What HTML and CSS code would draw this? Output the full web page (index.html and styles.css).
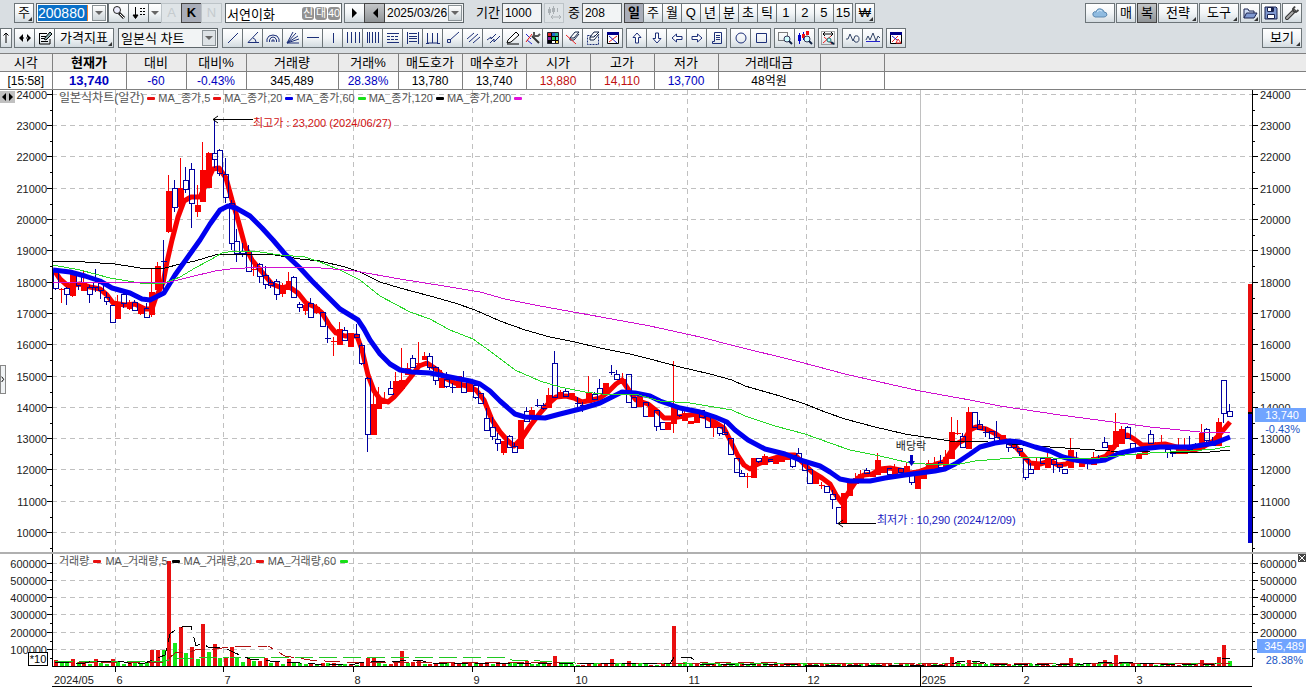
FILE: index.html
```html
<!DOCTYPE html>
<html lang="ko">
<head>
    <meta charset="utf-8">
    <title>서연이화 - 차트</title>
    <link rel="stylesheet" href="styles.css">
</head>
<body>
    <header class="toolbars">
        <div class="toolbar">
            <div class="group first">
                <button class="btn more">주</button>
            </div>
            <div class="combo code">
                <input type="text" value="200880" aria-label="종목코드">
                <button class="drop" aria-label="종목 목록"></button>
            </div>
            <div class="group">
                <button class="btn" aria-label="종목 검색"><svg viewBox="0 0 16 16"><circle cx="6" cy="5" r="3.5" fill="#eef" stroke="#222"/><path d="M8 8l5 5" stroke="#222" stroke-width="3"/><path d="M9 9l4 4" stroke="#fff"/></svg></button>
                <button class="btn" aria-label="정렬"><svg viewBox="0 0 16 16"><path d="M4.500 2v11M2 10l2.500 3.500L7 10z" stroke="#000" fill="#000"/><path d="M9 3.500h6M9 6.500h6M9 9.500h6" stroke="#000" stroke-dasharray="2 1"/></svg></button>
                <button class="btn thin" aria-label="정렬 목록"><i class="down"></i></button>
                <button class="btn off" disabled>A</button>
                <button class="btn on">K</button>
                <button class="btn off" disabled>N</button>
            </div>
            <div class="name">
                <input type="text" value="서연이화" aria-label="종목명">
                <span class="tag">신</span><span class="tag">대</span><span class="tag">40</span>
            </div>
            <div class="group step">
                <button class="btn" aria-label="다음"><svg viewBox="0 0 16 16"><path d="M5 3v10l5-5z"/></svg></button>
                <button class="btn gray" aria-label="이전"><svg viewBox="0 0 16 16"><path d="M11 3v10L6 8z"/></svg></button>
            </div>
            <div class="combo date">
                <input type="text" value="2025/03/26" aria-label="날짜">
                <button class="drop" aria-label="달력"></button>
            </div>
            <label class="lbl period" for="period">기간</label>
            <input class="num" type="text" id="period" value="1000">
            <button class="btn faded" aria-label="간격 조정"><svg viewBox="0 0 16 16"><path d="M3.500 2v8M7.500 1v8M11.500 3v4M6 12h8M7 10l-2 2 2 2M13 10l2 2-2 2" fill="none" stroke="#aab0b4"/><path d="M2 4h3v4H2zM6 3h3v4H6z" fill="#aab0b4"/></svg></button>
            <label class="lbl" for="count">중</label>
            <input class="num" type="text" id="count" value="208">
            <div class="group cycle">
                <button class="btn on">일</button>
                <button class="btn">주</button>
                <button class="btn">월</button>
                <button class="btn">Q</button>
                <button class="btn">년</button>
                <button class="btn">분</button>
                <button class="btn">초</button>
                <button class="btn">틱</button>
                <button class="btn">1</button>
                <button class="btn">2</button>
                <button class="btn">5</button>
                <button class="btn">15</button>
            </div>
            <button class="btn more">₩</button>
            <div class="right">
                <button class="btn cloud" aria-label="클라우드"><svg viewBox="0 0 16 16"><path d="M3 12q-3-1-2-4 1-2 3-1 1-4 5-3 3 1 3 3 3 0 3 3-1 2-3 2z" fill="#8fbbe0" stroke="#5c88b0"/><path d="M5 7q2-3 5-1" fill="none" stroke="#d5eafa"/></svg></button>
                <button class="btn">매</button>
                <button class="btn gray">복</button>
                <button class="btn wide more">전략</button>
                <button class="btn wide more">도구</button>
                <button class="btn more" aria-label="열기"><svg viewBox="0 0 16 16"><path d="M2 13V4h4l1 2h5v2" fill="#cfdcf4" stroke="#1c2450"/><path d="M2 13l2.500-5H15l-3 5z" fill="#7f98d0" stroke="#1c2450"/></svg></button>
                <button class="btn" aria-label="저장"><svg viewBox="0 0 16 16"><path d="M2 2h11l1 1v11H2z" fill="#7f98d0" stroke="#1c2450"/><path d="M4.500 2.500h6v4h-6zM4.500 9.500h7v4h-7z" fill="#fff" stroke="#1c2450"/><path d="M8 3h2v3H8z" fill="#1c2450"/></svg></button>
                <button class="btn" aria-label="설정"><svg viewBox="0 0 16 16"><path d="M3 13l7-7" stroke="#333" stroke-width="4" stroke-linecap="round"/><path d="M3 13l7-7" stroke="#aaa" stroke-width="2" stroke-linecap="round"/><path d="M11 1.500L9 4l.5 2.500L12 7l2.500-2" fill="none" stroke="#444" stroke-width="2"/></svg></button>
            </div>
        </div>
        <div class="toolbar">
            <button class="btn thin" aria-label="위로"><svg viewBox="0 0 10 16"><path d="M5 3v10M2.500 5.500L5 3l2.500 2.500" fill="none" stroke="#000"/></svg></button>
            <div class="group tight">
                <button class="btn" aria-label="좌우"><svg viewBox="0 0 16 16"><path d="M6 4v8L2 8zM10 4v8l4-4zM5 7.500h2v1H5zM9 7.500h2v1H9z"/></svg></button>
                <button class="btn" aria-label="편집"><svg viewBox="0 0 16 16"><path d="M2 3.500h8M2.500 3v11H13V9M4 6.500h5M4 8.500h3M4 11.500h7" fill="none" stroke="#000"/><path d="M7 9l6-7 2 2-6 6z" fill="#8aa" stroke="#000"/></svg></button>
                <button class="btn more index">가격지표</button>
            </div>
            <div class="pick">
                <select aria-label="차트 종류"><option>일본식 차트</option></select>
            </div>
            <div class="group draw">
                <button class="btn" aria-label="추세선"><svg viewBox="0 0 16 16"><path d="M3 13L13 3"/></svg></button>
                <button class="btn" aria-label="각도"><svg viewBox="0 0 16 16"><path d="M13 2L3 12.500h11M8 8q3 1 3 4"/></svg></button>
                <button class="btn" aria-label="아크"><svg viewBox="0 0 16 16"><path d="M2 12V9q1-4 6-4t6 4v3M4.500 12v-2q1-3 3.500-3t3.500 3v2M7 12v-2h2v2"/></svg></button>
                <button class="btn" aria-label="팬"><svg viewBox="0 0 16 16"><path d="M2 13L8 2M2 13l9-10M2 13l11-7M2 13l12-4M2 13h12"/></svg></button>
                <button class="btn" aria-label="수평선"><svg viewBox="0 0 16 16"><path d="M2 7.500h12"/></svg></button>
                <button class="btn" aria-label="수직선"><svg viewBox="0 0 16 16"><path d="M8.500 3v10"/></svg></button>
                <button class="btn" aria-label="시간대"><svg viewBox="0 0 16 16"><path d="M2.500 2v11M6.500 2v11M10.500 2v11M14.500 2v11"/></svg></button>
                <button class="btn" aria-label="피보나치 시간"><svg viewBox="0 0 16 16"><path d="M2.500 2v11M4.500 2v11M7.500 2v11M10.500 2v11M13.500 2v11"/></svg></button>
                <button class="btn" aria-label="되돌림"><svg viewBox="0 0 16 16"><path d="M2 3.500h12M2 12.500h12"/><path d="M2 6.500h12M2 9.500h12" stroke-dasharray="3 1"/></svg></button>
                <button class="btn" aria-label="분할선"><svg viewBox="0 0 16 16"><path d="M2.500 2v12M13.500 2v12M4 3.500h8M4 6.500h8M4 8.500h8M4 11.500h8"/></svg></button>
                <button class="btn" aria-label="사이클"><svg viewBox="0 0 16 16"><path d="M2.500 3v10h10V3M7.500 3v10M1 13.500h3M12 13.500h3"/></svg></button>
                <button class="btn" aria-label="선분"><svg viewBox="0 0 16 16"><path d="M5 10l9-8M2.500 9.500h3v3h-3z"/></svg></button>
                <button class="btn" aria-label="평행선"><svg viewBox="0 0 16 16"><path d="M2 9l7-6M4 12l9-8M8 13l7-6"/></svg></button>
                <button class="btn" aria-label="채널"><svg viewBox="0 0 16 16"><path d="M2 10l4-3v2l5-5M5 13l4-4v3l6-6"/></svg></button>
                <button class="btn" aria-label="연필"><svg viewBox="0 0 16 16"><path d="M3 10l8-8 3 3-8 7-4 1z" fill="#fff" stroke="#000"/><path d="M2 14h12" stroke="#000"/></svg></button>
                <button class="btn" aria-label="도구 설정"><svg viewBox="0 0 16 16"><path d="M1 4l5 5M2 10l5 4" stroke="#22c"/><path d="M1 12L7 4" stroke="#e11"/><path d="M7 6l7 7" stroke="#333" stroke-width="2"/><path d="M9 2v4h4l2-2" stroke="#555" stroke-width="2"/></svg></button>
                <button class="btn" aria-label="색상"><svg viewBox="0 0 16 16"><path d="M2.500 2.500h11v11h-11z" fill="#000" stroke="#223"/><path d="M3 3h3v3H3z" fill="#d22" stroke="none"/><path d="M7 3h3v3H7z" fill="#26c" stroke="none"/><path d="M10 3h3v3h-3z" fill="#2a8" stroke="none"/><path d="M3 7h3v3H3z" fill="#82a" stroke="none"/><path d="M7 7h3v3H7z" fill="#2c4" stroke="none"/><path d="M11 7h2v3h-2z" fill="#3dd" stroke="none"/><path d="M7 11h3v2H7z" fill="#fff" stroke="none"/><path d="M11 11h2v2h-2z" fill="#fd4" stroke="none"/></svg></button>
                <button class="btn" aria-label="지우개"><svg viewBox="0 0 16 16"><path d="M5 8l5-6h4l-5 6zM5 8v2h4l5-6" fill="#fff" stroke="#124"/><path d="M1 5l10 9" stroke="#e22"/></svg></button>
                <button class="btn" aria-label="영역 지우기"><svg viewBox="0 0 16 16"><path d="M2.500 5.500h11v9h-11z" stroke-dasharray="2 1"/><path d="M5 7l4-5h5l-5 5zM5 7v3h4l5-6" fill="#fff" stroke="#124"/></svg></button>
                <button class="btn" aria-label="전체 삭제"><svg viewBox="0 0 16 16"><path d="M2.500 2.500h11v11h-11z" fill="#fff" stroke="#000"/><path d="M2 2h12v3H2z" fill="#008" stroke="none"/><path d="M4 12l8-6" stroke="#e22"/><path d="M4 6l8 7" stroke="#22c"/></svg></button>
            </div>
            <div class="group draw">
                <button class="btn" aria-label="위 화살표"><svg viewBox="0 0 16 16"><path d="M8 3l4 4.500H9.500V13h-3V7.500H4z" fill="#fff"/></svg></button>
                <button class="btn" aria-label="아래 화살표"><svg viewBox="0 0 16 16"><path d="M8 13l4-4.500H9.500V3h-3v5.500H4z" fill="#fff"/></svg></button>
                <button class="btn" aria-label="왼쪽 화살표"><svg viewBox="0 0 16 16"><path d="M3 8l4.500-4v2.500H13v3H7.500V12z" fill="#fff"/></svg></button>
                <button class="btn" aria-label="오른쪽 화살표"><svg viewBox="0 0 16 16"><path d="M13 8L8.500 4v2.500H3v3h5.500V12z" fill="#fff"/></svg></button>
                <button class="btn" aria-label="메모"><svg viewBox="0 0 16 16"><path d="M5.500 2.500h7v11h-9v-2h2zM7 5.500h4M7 7.500h4M7 9.500h4"/></svg></button>
            </div>
            <div class="group draw">
                <button class="btn" aria-label="원"><svg viewBox="0 0 16 16"><circle cx="8" cy="8" r="5"/></svg></button>
                <button class="btn" aria-label="사각형"><svg viewBox="0 0 16 16"><path d="M3.500 3.500h10v9h-10z"/></svg></button>
            </div>
            <div class="group draw">
                <button class="btn" aria-label="영역 확대"><svg viewBox="0 0 16 16"><path d="M1.500 2.500h9v8h-9z" stroke="#000" stroke-dasharray="1 1"/><circle cx="10" cy="9" r="3" fill="#cff" stroke="#335"/><path d="M12 11l3 3" stroke="#124" stroke-width="2"/></svg></button>
                <button class="btn" aria-label="봉 확대"><svg viewBox="0 0 16 16"><path d="M2.500 3v11M6.500 2v8" stroke="#00c"/><path d="M1 5h3v6H1z" fill="#00c" stroke="none"/><path d="M5 4h3v4H5zM9 1h3v4H9z" fill="#e11" stroke="none"/><circle cx="10" cy="9" r="3" fill="#cff" stroke="#335"/><path d="M12 11l3 3" stroke="#124" stroke-width="2"/></svg></button>
            </div>
            <button class="btn draw gridbtn" aria-label="전체 보기"><svg viewBox="0 0 16 16"><path d="M1.500 1.500h13v13h-13z" stroke="#555" stroke-dasharray="1 1"/><path d="M3 4h10M5 2L3 4l2 2M11 2l2 2-2 2" stroke="#000"/><path d="M3 13l8-7M4 7l8 7" stroke="#e22"/><circle cx="9" cy="10" r="2" fill="#aff" stroke="#266"/><path d="M11 12l3 2" stroke="#024" stroke-width="2"/></svg></button>
            <div class="group draw">
                <button class="btn" aria-label="파동"><svg viewBox="0 0 16 16"><path d="M1 9h2l2-5 3 7 2-5q4-1 4 3t-4 3l-2-3" stroke="#346"/></svg></button>
                <button class="btn" aria-label="파동 지표"><svg viewBox="0 0 16 16"><path d="M1 10l2-4 2 4 3-7 3 8 2-5 2 2" stroke="#346"/><path d="M1 11.500h14" stroke="#22c"/></svg></button>
            </div>
            <button class="btn draw" aria-label="차트 초기화"><svg viewBox="0 0 16 16"><path d="M2.500 2.500h11v11h-11z" fill="#fff" stroke="#000"/><path d="M2 2h12v3H2z" fill="#008" stroke="none"/><path d="M4 12l6-6M8 13l2-4 3 4z" stroke="#e22"/><path d="M4 6l5 4" stroke="#22c"/></svg></button>
            <div class="right">
                <button class="btn wide more">보기</button>
            </div>
        </div>
    </header>

    <table class="quote">
        <colgroup>
            <col class="w52"><col class="w74"><col class="w60"><col class="w60"><col class="w92"><col class="w60">
            <col class="w64"><col class="w64"><col class="w64"><col class="w64"><col class="w64"><col class="w102"><col class="w64"><col>
        </colgroup>
        <tr>
            <th>시각</th><th class="now">현재가</th><th>대비</th><th>대비%</th><th>거래량</th><th>거래%</th><th>매도호가</th><th>매수호가</th><th>시가</th><th>고가</th><th>저가</th><th>거래대금</th><th></th><th></th>
        </tr>
        <tr>
            <td>[15:58]</td><td class="now down-price">13,740</td><td class="down-price">-60</td><td class="down-price">-0.43%</td><td>345,489</td><td class="down-price">28.38%</td><td>13,780</td><td>13,740</td><td class="up-price">13,880</td><td class="up-price">14,110</td><td class="down-price">13,700</td><td>48억원</td><td></td><td></td>
        </tr>
    </table>

    <main class="chart">
        <svg id="chart"></svg>
        <div class="legend price">
            <span class="title">일본식차트(일간)</span><i class="red"></i>
            <span>MA_종가,5</span><i class="red"></i>
            <span>MA_종가,20</span><i class="blue"></i>
            <span>MA_종가,60</span><i class="green"></i>
            <span>MA_종가,120</span><i class="black"></i>
            <span>MA_종가,200</span><i class="pink"></i>
        </div>
        <div class="legend volume">
            <span>거래량</span><i class="red"></i>
            <span>MA_거래량,5</span><i class="black"></i>
            <span>MA_거래량,20</span><i class="red"></i>
            <span>MA_거래량,60</span><i class="green"></i>
        </div>
        <button class="split" aria-label="축 이동"><svg viewBox="0 0 15 12"><path d="M6 2v8L2 6zM9 2v8l4-4z"/></svg></button>
        <button class="handle" aria-label="패널 열기"><svg viewBox="0 0 6 10"><path d="M1 1l3 4-3 4" fill="none" stroke="#000" stroke-width="1.500"/></svg></button>
        <span class="unit">*10</span>
        <button class="close" aria-label="닫기"><svg viewBox="0 0 8 8"><path d="M1 1l6 6M7 1L1 7" stroke="#fff"/></svg></button>
    </main>
    <script src="chart.js"></script>
</body>
</html>
```
FILE: styles.css
```css
* { box-sizing: border-box; }
body { margin: 0; background-color: white; color: black; font-family: "Liberation Sans", "Noto Sans CJK KR", sans-serif; font-size: 12px; }
button, input, select { font-family: inherit; font-size: 12px; color: black; padding: 0; margin: 0; border-radius: 0; }

.toolbars { background-color: #d9dee2; height: 53px; padding-top: 3px; }
.toolbar { display: flex; align-items: center; height: 20px; margin-bottom: 5px; padding-right: 4px; white-space: nowrap; }
.group { display: flex; }
.btn { position: relative; width: 20px; height: 20px; flex: none; border: 1px solid #6d7579; background: linear-gradient(#fff, #f2f5f7 50%, #d3dbe0); font-size: 13px; line-height: 16px; text-align: center; }
.group .btn { width: 21px; margin-right: -1px; }
.btn svg { display: block; width: 16px; height: 16px; margin: 0 auto; fill: black; }
.btn.more::after { content: ""; position: absolute; right: 1px; bottom: 1px; border: 2px solid #333; border-top-color: transparent; border-left-color: transparent; }
.btn.on { background: #a9adb8; font-weight: bold; border-color: #444; }
.btn.gray { background: linear-gradient(#c4c6c8, #8f9396); border-color: #444; }
.btn.off, .btn.faded { color: #c5cbce; border-color: #bcc3c7; background: #dfe4e7; }
.btn.wide { width: 40px; }
.btn.cloud { width: 30px; }
.group .btn.thin { width: 14px; }
.toolbar > .btn.thin { width: 12px; }
.btn.thin svg { width: 10px; }
.btn:hover { background: white; }
.first { margin-left: 14px; margin-right: 2px; }
.group.first .btn { margin-right: 0; width: 20px; }

.combo { display: flex; align-items: center; height: 20px; background-color: white; border: 1px solid #5e666a; padding: 1px; }
.combo input { border: none; outline: none; min-width: 0; flex: 1; height: 16px; background: transparent; }
.code { width: 72px; }
.combo.code input { flex: none; width: 50px; background-color: #0a70c8; color: white; font-size: 14px; border-right: 1px solid #f08030; }
.code .drop { margin-left: auto; }
.date { width: 80px; background-color: #f2f4f5; padding-left: 2px; }
.drop { width: 14px; height: 16px; border: 1px solid #8a9296; background: linear-gradient(#fff, #cdd5d9); flex: none; }
.drop::before, .down { content: ""; display: block; width: 0; height: 0; margin: 0 auto; border: 4px solid transparent; border-top-color: #666; border-bottom: none; }
.name { display: flex; align-items: center; width: 117px; height: 20px; margin-left: 4px; border: 1px solid #5e666a; background-color: white; padding: 0 1px; }
.name input { flex: 1; min-width: 0; height: 18px; border: none; font-size: 13px; }
.tag { width: 12px; height: 13px; margin-left: 1px; border-radius: 3px; background-color: #929292; color: white; font-size: 11px; line-height: 13px; text-align: center; }
.step { margin-left: 2px; margin-right: 0; }
.lbl { margin-left: 4px; font-size: 13px; line-height: 18px; }
.period { margin-left: 12px; }
.num { width: 40px; height: 20px; margin: 0 2px; padding-left: 2px; border: 1px solid #5e666a; background-color: #f2f4f5; }
.cycle { margin-right: 3px; }
.group.cycle .btn { width: 20px; }
.right { display: flex; gap: 1px; margin-left: auto; }

.tight { margin-left: 2px; }
.group .btn.index { width: 60px; margin-right: 0; }
.pick { position: relative; width: 100px; height: 20px; margin: 0 4px; flex: none; }
.pick select { appearance: none; width: 100%; height: 20px; padding-left: 2px; border: 1px solid #5e666a; background-color: #f2f4f5; font-size: 13px; }
.pick::before { content: ""; position: absolute; right: 2px; top: 2px; width: 12px; height: 14px; border: 1px solid #8a9296; background-color: #dde2e5; pointer-events: none; }
.pick::after { content: ""; position: absolute; right: 5px; top: 8px; border: 4px solid transparent; border-top-color: #666; border-bottom: none; pointer-events: none; }
.draw svg { fill: none; stroke: #1c2f78; }
.group.draw { margin-right: 4px; }
.gridbtn { margin-right: 4px; }

.quote { width: 100%; table-layout: fixed; border-collapse: collapse; text-align: center; }
.quote th, .quote td { height: 18px; padding: 0; border: 1px solid #808080; font-weight: normal; line-height: 16px; overflow: hidden; white-space: nowrap; }
.quote th { background-color: #ebebeb; font-size: 13px; }
.quote th:first-child, .quote td:first-child { border-left: none; }
.quote th:last-child, .quote td:last-child { border-right: none; }
.quote .now { font-weight: bold; font-size: 13px; }
.quote .down-price { color: #0000c0; }
.quote .up-price { color: #c01010; }
.w52 { width: 52px; }
.w60 { width: 60px; }
.w64 { width: 64px; }
.w74 { width: 74px; }
.w92 { width: 92px; }
.w102 { width: 102px; }

.chart { position: relative; overflow: hidden; }
#chart { display: block; width: 100%; height: 597px; }
#chart text { font-size: 11px; fill: #222; }
.legend { position: absolute; left: 59px; display: flex; align-items: center; gap: 3px; font-size: 11px; line-height: 14px; color: #555; }
.legend i { width: 8px; height: 3px; border-radius: 1px; }
.legend .title { font-size: 12px; }
.legend.price { top: 1px; }
.legend.volume { top: 464px; gap: 4px; }
.red { background-color: #e81010; }
.blue { background-color: #0000e8; }
.green { background-color: #18e018; }
.black { background-color: black; }
.pink { background-color: #e010d8; }
.split { position: absolute; left: 0; top: 1px; width: 15px; height: 12px; border: none; background-color: #c0c0c0; }
.split svg, .close svg, .handle svg { display: block; width: 100%; }
.handle { position: absolute; left: 0; top: 275px; width: 6px; height: 29px; border: 1px solid #888; background-color: #f0f3f5; }
.unit { position: absolute; left: 28px; top: 562px; width: 20px; height: 14px; border: 1px solid black; background-color: white; font-size: 11px; line-height: 12px; text-align: center; }
.close { position: absolute; right: 0; top: 464px; width: 8px; height: 8px; border: none; background-color: #444; }
```
FILE: chart.js
```js
// every item: colour, body top, body bottom, high, low (b = down, r = up)
const candles = `
b271,288,268,290 r289,290,288,303 b288,294,287,305 r273,295,270,297 b273,285,272,290 r283,290,270,291 b287,294,285,303 b282,287,269,292
b283,290,281,299 b297,301,292,305 b305,322,305,322 r302,318,295,318 b294,303,292,308 r303,308,300,310 b302,310,300,310 r308,313,307,315
b308,317,303,318 r292,314,269,317 r266,289,262,290 b261,262,240,290 r191,231,175,233 b188,207,180,212 r188,206,158,213 b180,189,167,193
b169,203,163,228 r205,211,185,217 r170,201,142,202 r153,187,152,187 b153,159,119,168 b150,173,149,176 b174,197,158,203 b203,243,200,250
b241,253,229,262 b251,253,243,257 b251,271,245,271 r269,270,258,276 b264,276,263,283 b275,284,266,289 b282,285,280,288 b281,294,279,300
r285,293,283,297 r281,289,272,290 b277,297,276,298 b304,307,302,312 r305,310,303,315 b303,317,298,318 r307,312,304,314 b312,326,312,327
b338,339,326,343 r341,342,337,356 r329,344,322,345 b330,340,327,341 r333,346,333,346 b334,337,324,337 b345,363,343,365 b378,434,377,452
r404,434,387,434 r398,408,387,408 r401,403,392,403 b388,394,381,394 r381,392,372,392 r380,388,348,388 r368,374,363,374 b358,367,355,367
r363,364,342,364 r356,359,352,359 b356,367,353,370 b367,380,366,385 r378,387,370,387 b379,386,372,388 b387,388,383,393 r376,387,376,387
b380,392,371,392 r383,391,383,391 b385,397,385,399 b393,403,393,403 b418,430,408,430 b427,436,417,440 b439,443,433,451 r441,452,441,455
b436,447,435,447 b446,452,443,452 r420,448,420,448 b411,421,407,421 r410,418,407,418 b405,406,399,407 b405,408,403,410 r395,407,388,407
b363,397,351,398 r392,397,390,397 b391,396,388,396 r393,397,393,397 b403,404,397,407 b405,406,402,412 r393,402,376,402 b394,399,392,399
b388,393,379,393 r383,394,383,394 b372,373,365,375 b374,379,370,379 r379,381,373,381 b374,402,374,402 b397,407,397,407 r393,406,393,406
b402,416,402,417 r406,416,406,416 b410,426,410,431 b422,429,422,429 r422,429,422,429 r406,423,361,433 b409,415,409,417 r413,420,409,420
r421,423,421,423 r411,422,411,422 b410,417,410,417 b416,427,416,427 r423,427,423,437 b427,433,427,436 b432,434,420,434 b438,454,438,454
b458,472,458,472 b473,476,470,476 r476,477,473,488 r458,477,458,477 b458,461,458,463 r456,464,454,464 b459,461,459,461 r458,463,458,463
r453,461,453,461 r454,459,454,459 b455,466,455,468 b453,460,448,460 b460,470,460,470 b469,483,469,483 r474,483,474,483 r485,486,482,489
b486,492,486,492 b494,499,490,509 b507,523,507,523 r493,523,493,523 r479,495,479,495 r478,483,473,483 r474,479,470,479 b470,473,468,473
r472,476,472,476 r460,474,453,474 r467,472,467,472 b468,474,468,476 r468,475,464,475 b468,472,468,472 r466,472,462,472 b472,482,472,485
r474,488,474,488 r468,478,468,478 r463,473,460,473 r463,469,457,469 b462,467,455,467 r457,466,450,466 r432,458,417,458 r433,434,420,435
b436,447,433,447 r412,448,407,448 b412,427,412,427 b424,429,420,429 b432,433,427,437 b431,438,431,438 b437,441,421,441 r435,442,435,442
b444,447,444,452 b443,447,443,449 b448,451,448,456 b459,477,459,480 b469,473,463,473 r462,469,457,469 b458,463,458,463 r458,467,453,467
b459,464,459,473 b464,467,464,472 b469,473,469,473 r450,467,438,467 b460,461,452,461 r462,466,462,466 b463,464,460,469 r457,464,452,464
b458,459,455,459 b442,447,437,447 r445,457,445,457 r431,446,413,446 r429,443,426,443 b427,438,426,438 b443,449,443,452 r454,458,454,459
r444,454,444,454 b434,443,430,443 r444,446,442,446 r442,445,435,445 b449,452,449,458 b451,453,451,457 r449,453,438,453 r445,453,438,453
b447,449,436,449 b447,448,443,448 r433,448,424,448 b429,440,428,445 b445,446,437,446 r422,445,418,446 b380,413,380,423 b411,416,404,417`;

// bar heights
const volumes = `
r7 g4 g4 r8 g5 r4 g3 r8 g4 g3 r8 g5 g3 r4 g5 g4 g4 r17 r17 g17 r106 g24 r40 g14 r20 g8 r43 g15 r23 g9 r10 r20
g10 g5 r8 g6 r6 r9 g4 r5 g3 r8 g5 g4 g3 r4 g3 r4 g4 r4 g3 g3 r3 g2 r4 r9 r9 g4 g3 r3 r4 r16 g4 r5
r6 g3 r3 r4 g3 g4 r5 r4 g3 r5 g4 r4 r5 g3 r4 r4 g4 g4 g3 r6 g3 g3 g3 r3 r11 g4 g5 g3 g2 r2 r3 g3
r3 r4 r8 g4 g4 r6 g4 g3 g3 r2 g2 r3 g3 r41 g4 g5 g3 r3 g3 r4 r3 g3 r3 g4 g4 r4 g3 g3 r3 g2 r2 r3
r3 r3 g3 r3 g3 r3 g3 r4 r3 g4 g4 r4 r3 r3 g3 r3 g3 g3 r3 r3 g2 r3 g3 r3 r3 r3 r4 g3 r3 r4 r10 g5
g3 r7 g5 g4 g3 g3 r3 g3 r3 g2 g3 r4 g3 g3 r3 r2 g2 r3 g2 r9 g3 g3 g3 r3 g3 r7 g3 r12 g3 g4 r3 g4
r3 r4 g2 g3 r4 r3 r2 g2 g2 r4 r7 g3 r3 r10 r22 g6`;

const ma5 = "54,270 60,279 68,286 80,284 90,287 100,289 107,295 113,303 125,305 135,304 145,309 152,309 156,297 163,283 167,262 172,240 178,217 184,201 191,197 200,197 207,182 213,169 219,168 226,178 232,200 238,220 245,246 252,260 262,272 272,284 282,288 288,286 298,293 306,303 315,307 322,313 330,326 336,333 345,336 357,336 362,350 368,375 374,391 380,399 388,402 394,397 402,388 410,378 419,366 427,363 436,369 445,378 455,383 467,386 476,390 484,400 492,420 500,432 508,441 514,446 522,438 530,426 540,413 548,404 556,397 566,396 574,398 582,402 592,400 600,398 608,392 616,384 622,380 628,389 636,400 648,404 658,412 664,418 672,418 684,416 696,414 706,417 716,423 724,428 730,440 738,456 744,465 750,469 756,465 765,461 775,458 785,455 795,455 803,463 812,472 822,478 830,484 836,495 842,503 850,490 858,478 864,475 872,474 880,469 890,468 900,470 910,473 918,472 926,469 936,464 944,462 952,450 958,443 964,440 970,430 976,427 986,429 996,434 1006,441 1015,446 1022,454 1030,463 1040,464 1050,461 1058,465 1066,464 1074,459 1084,462 1094,460 1106,456 1114,447 1120,438 1127,435 1134,439 1142,445 1152,445 1165,444 1180,448 1195,450 1205,446 1213,441 1220,434 1230,422";
const ma20 = "53,270 70,272 85,276 100,281 112,288 130,293 142,299 150,300 164,293 175,275 190,254 200,240 210,224 220,210 228,206 236,208 250,216 262,228 273,240 285,254 300,268 312,281 325,294 340,309 358,320 364,329 370,340 380,354 390,364 400,370 412,372 430,373 450,377 470,381 480,384 490,391 500,401 515,414 525,417 545,418 560,414 580,409 600,403 612,397 622,392 635,393 650,396 660,401 680,408 700,412 715,417 727,422 735,430 748,440 765,449 785,454 800,460 820,466 830,472 840,479 850,481 870,481 885,478 905,475 920,473 935,471 945,469 955,464 970,454 980,447 995,443 1010,441 1020,442 1035,447 1050,451 1063,457 1075,460 1090,462 1105,460 1120,453 1140,449 1160,447 1190,447 1215,443 1230,437";
const ma60 = "53,265 80,270 110,278 140,283 165,283 180,277 195,268 210,260 222,253 235,251 260,252 280,255 305,257 320,262 340,270 360,280 380,296 410,312 430,319 450,330 473,339 490,351 515,370 540,381 560,387 585,392 610,395 635,394 660,401 690,403 720,408 732,410 745,416 775,426 805,434 830,443 850,450 880,456 910,463 940,465 960,464 975,461 1000,459 1025,457 1080,459 1100,458 1125,455 1150,453 1190,451 1215,449 1230,446";
const ma120 = "53,261 85,262 115,264 140,268 165,268 180,264 195,261 215,255 230,254 255,254 275,255 300,259 320,261 345,267 360,272 380,282 400,288 430,296 455,303 475,310 500,321 525,330 550,337 575,342 600,348 630,354 650,359 680,367 710,374 732,380 745,386 780,396 805,404 825,412 845,419 875,427 905,434 950,441 975,441 1000,443 1035,446 1080,449 1110,451 1150,452 1200,453 1230,450";
const ma200 = "53,282 170,282 190,277 215,271 230,269 260,267 310,267 355,271 400,279 450,287 480,292 505,299 540,306 590,315 650,326 700,337 735,346 800,362 845,374 880,382 920,391 970,400 1000,406 1060,415 1105,421 1150,427 1200,432 1230,433";

const vol5 = "55,662 70,663 85,663 93,661 120,661 128,663 145,663 165,655 170,634 178,628 182,627 191,626 196,646 202,643 208,647 225,648 235,653 250,659 270,661 300,663 330,665 355,664 368,661 400,661 420,660 430,663 550,664 600,663 670,664 674,657 690,657 700,664 800,665 950,665 957,662 975,661 990,664 1070,665 1110,662 1135,663 1180,665 1215,664 1223,658 1230,658";
const vol20 = "55,663 165,662 175,653 190,652 195,650 215,649 230,647 268,646 285,656 310,660 340,662 400,663 500,662 560,663 700,663 760,662 800,664 950,663 1230,664";
const vol60 = "55,661 165,661 172,659 195,658 230,657 502,657 512,660 540,661 575,663 860,663 890,663 1230,663";

const months = [[115, '6'], [223, '7'], [353, '8'], [472, '9'], [574, '10'], [687, '11'], [806, '12'], [920, '2025'], [1022, '2'], [1135, '3']];

const TOP = 90;
const LEFT = 52;

function draw() {
    const svg = document.getElementById('chart');
    const W = svg.parentElement.clientWidth;
    const right = W - 54;
    const k = (right - LEFT) / 1200;
    const sx = x => Math.round(LEFT + (x - LEFT) * k);
    let out = '';

    const line = (x1, y1, x2, y2, color, extra = '') => {
        out += `<line x1="${x1}" y1="${y1}" x2="${x2}" y2="${y2}" stroke="${color}" shape-rendering="crispEdges" ${extra}/>`;
    };
    const rect = (x, y, w, h, fill, extra = '') => {
        out += `<rect x="${x}" y="${y}" width="${w}" height="${h}" fill="${fill}" shape-rendering="crispEdges" ${extra}/>`;
    };
    const text = (x, y, str, extra = '') => {
        out += `<text x="${x}" y="${y}" ${extra}>${str}</text>`;
    };
    const curve = (points, color, width, extra = '') => {
        const scaled = points.split(' ').map(p => {
            const [x, y] = p.split(',');
            return sx(+x) + ',' + y;
        }).join(' ');
        out += `<polyline points="${scaled}" fill="none" stroke="${color}" stroke-width="${width}" stroke-linejoin="round" ${extra}/>`;
    };
    const dash = 'stroke-dasharray="5 4"';

    // grid and axis labels
    for (let p = 10000; p <= 24000; p += 1000) {
        const y = Math.round(532 - (p - 10000) * 0.0313) + 0.5;
        line(LEFT, y, right, y, '#c0c0c0', dash);
        line(LEFT - 5, y, LEFT, y, '#000');
        line(right, y, right + 6, y, '#000');
        line(LEFT - 2, y + 16, LEFT, y + 16, '#000');
        line(right, y + 16, right + 3, y + 16, '#000');
        text(LEFT - 5, y + 4, p, 'text-anchor="end"');
        text(right + 8, y + 4, p);
    }
    for (let v = 1; v <= 6; v++) {
        const y = Math.round(666 - v * 17.2) + 0.5;
        line(LEFT, y, right, y, '#c0c0c0', dash);
        line(LEFT - 5, y, LEFT, y, '#000');
        line(right, y, right + 6, y, '#000');
        line(LEFT - 2, y + 9, LEFT, y + 9, '#000');
        line(right, y + 9, right + 3, y + 9, '#000');
        text(LEFT - 5, y + 4, v + '00000', 'text-anchor="end"');
        if (v > 1) text(right + 8, y + 4, v + '00000');
    }
    months.forEach(([mx, name]) => {
        const x = sx(mx) + 0.5;
        const year = name === '2025';
        line(x, TOP, x, 666, '#c0c0c0', year ? '' : dash);
        line(x, 667, x, year ? 686 : 672, '#000');
        text(x + 1, 684, name);
    });
    text(LEFT + 2, 684, '2024/05');

    // price panel
    curve(ma5, '#f80000', 5);
    const step = 5.671;
    candles.trim().split(/\s+/).forEach((item, i) => {
        const x = sx(55 + i * step);
        const [top, bottom, high, low] = item.slice(1).split(',').map(Number);
        const up = item[0] === 'r';
        const color = up ? '#f80000' : '#0000a0';
        if (bottom - top <= 1) {
            line(x + 0.5, high, x + 0.5, low, color);
            rect(x - 2, top, 6, 1, color);
            return;
        }
        line(x + 0.5, high, x + 0.5, top, color);
        line(x + 0.5, bottom, x + 0.5, low, color);
        if (up) rect(x - 2, top, 6, bottom - top + 1, color);
        else rect(x - 1.5, top + 0.5, 5, bottom - top, 'none', `stroke="${color}"`);
    });
    curve(ma120, '#000', 1, 'shape-rendering="crispEdges"');
    curve(ma20, '#0000f0', 5);
    curve(ma60, '#28d828', 1, 'shape-rendering="crispEdges"');
    curve(ma200, '#d010d0', 1, 'shape-rendering="crispEdges"');

    // volume panel
    volumes.trim().split(/\s+/).forEach((item, i) => {
        const h = +item.slice(1);
        rect(sx(55 + i * step) - 1, 667 - h, 4, h, item[0] === 'r' ? '#e81010' : '#18e818');
    });
    curve(vol60, '#20c820', 1, 'stroke-dasharray="18 6" shape-rendering="crispEdges"');
    curve(vol20, '#b01010', 1, 'stroke-dasharray="16 7" shape-rendering="crispEdges"');
    curve(vol5, '#000', 1, 'stroke-dasharray="14 7" shape-rendering="crispEdges"');

    // frame
    line(LEFT + 0.5, TOP, LEFT + 0.5, 667, '#000');
    line(right + 0.5, TOP, right + 0.5, 667, '#000');
    line(LEFT, 666.5, right, 666.5, '#000');
    line(LEFT, 686.5, right, 686.5, '#000');
    rect(0, 552, W, 2, '#b0b0b0');
    rect(right - 4, 284, 5, 129, '#e81010');
    rect(right - 4, 413, 5, 130, '#0000d0');
    rect(right - 4, 412, 5, 2, '#000');
    line(right + 0.5, 284, right + 0.5, 543, '#000');

    // high, low and dividend marks
    const hx = sx(213);
    line(hx, 119.5, hx + 40, 119.5, '#000');
    out += `<path d="M${hx + 5} 116l-5 3.500 5 3.500" fill="none" stroke="#000"/>`;
    text(hx + 40, 127, '최고가 : 23,200 (2024/06/27)', 'style="fill:#d01010"');
    const lx = sx(838);
    line(lx, 523.5, lx + 38, 523.5, '#000');
    out += `<path d="M${lx + 5} 520l-5 3.500 5 3.500" fill="none" stroke="#000"/>`;
    text(lx + 39, 524, '최저가 : 10,290 (2024/12/09)', 'style="fill:#1818c0"');
    const dx = sx(911);
    text(dx, 450, '배당락', 'text-anchor="middle"');
    out += `<path d="M${dx - 1} 455h3v6h2l-3.500 5-3.500-5h2z" fill="#0000c0"/>`;

    // current values on the right axis
    rect(right + 3, 408, 51, 14, '#70a4ff');
    rect(right + 12, 422, 42, 12, '#fff');
    text(W - 7, 419, '13,740', 'text-anchor="end" style="fill:#fff"');
    text(W - 6, 433, '-0.43%', 'text-anchor="end" style="fill:#1a56c4"');
    rect(right + 5, 639, 49, 14, '#70a4ff');
    text(W - 2, 650, '345,489', 'text-anchor="end" style="fill:#fff"');
    text(W - 3, 664, '28.38%', 'text-anchor="end" style="fill:#1a56c4"');

    svg.setAttribute('viewBox', `0 ${TOP} ${W} 597`);
    svg.innerHTML = out;
}

draw();
window.addEventListener('resize', draw);
```
